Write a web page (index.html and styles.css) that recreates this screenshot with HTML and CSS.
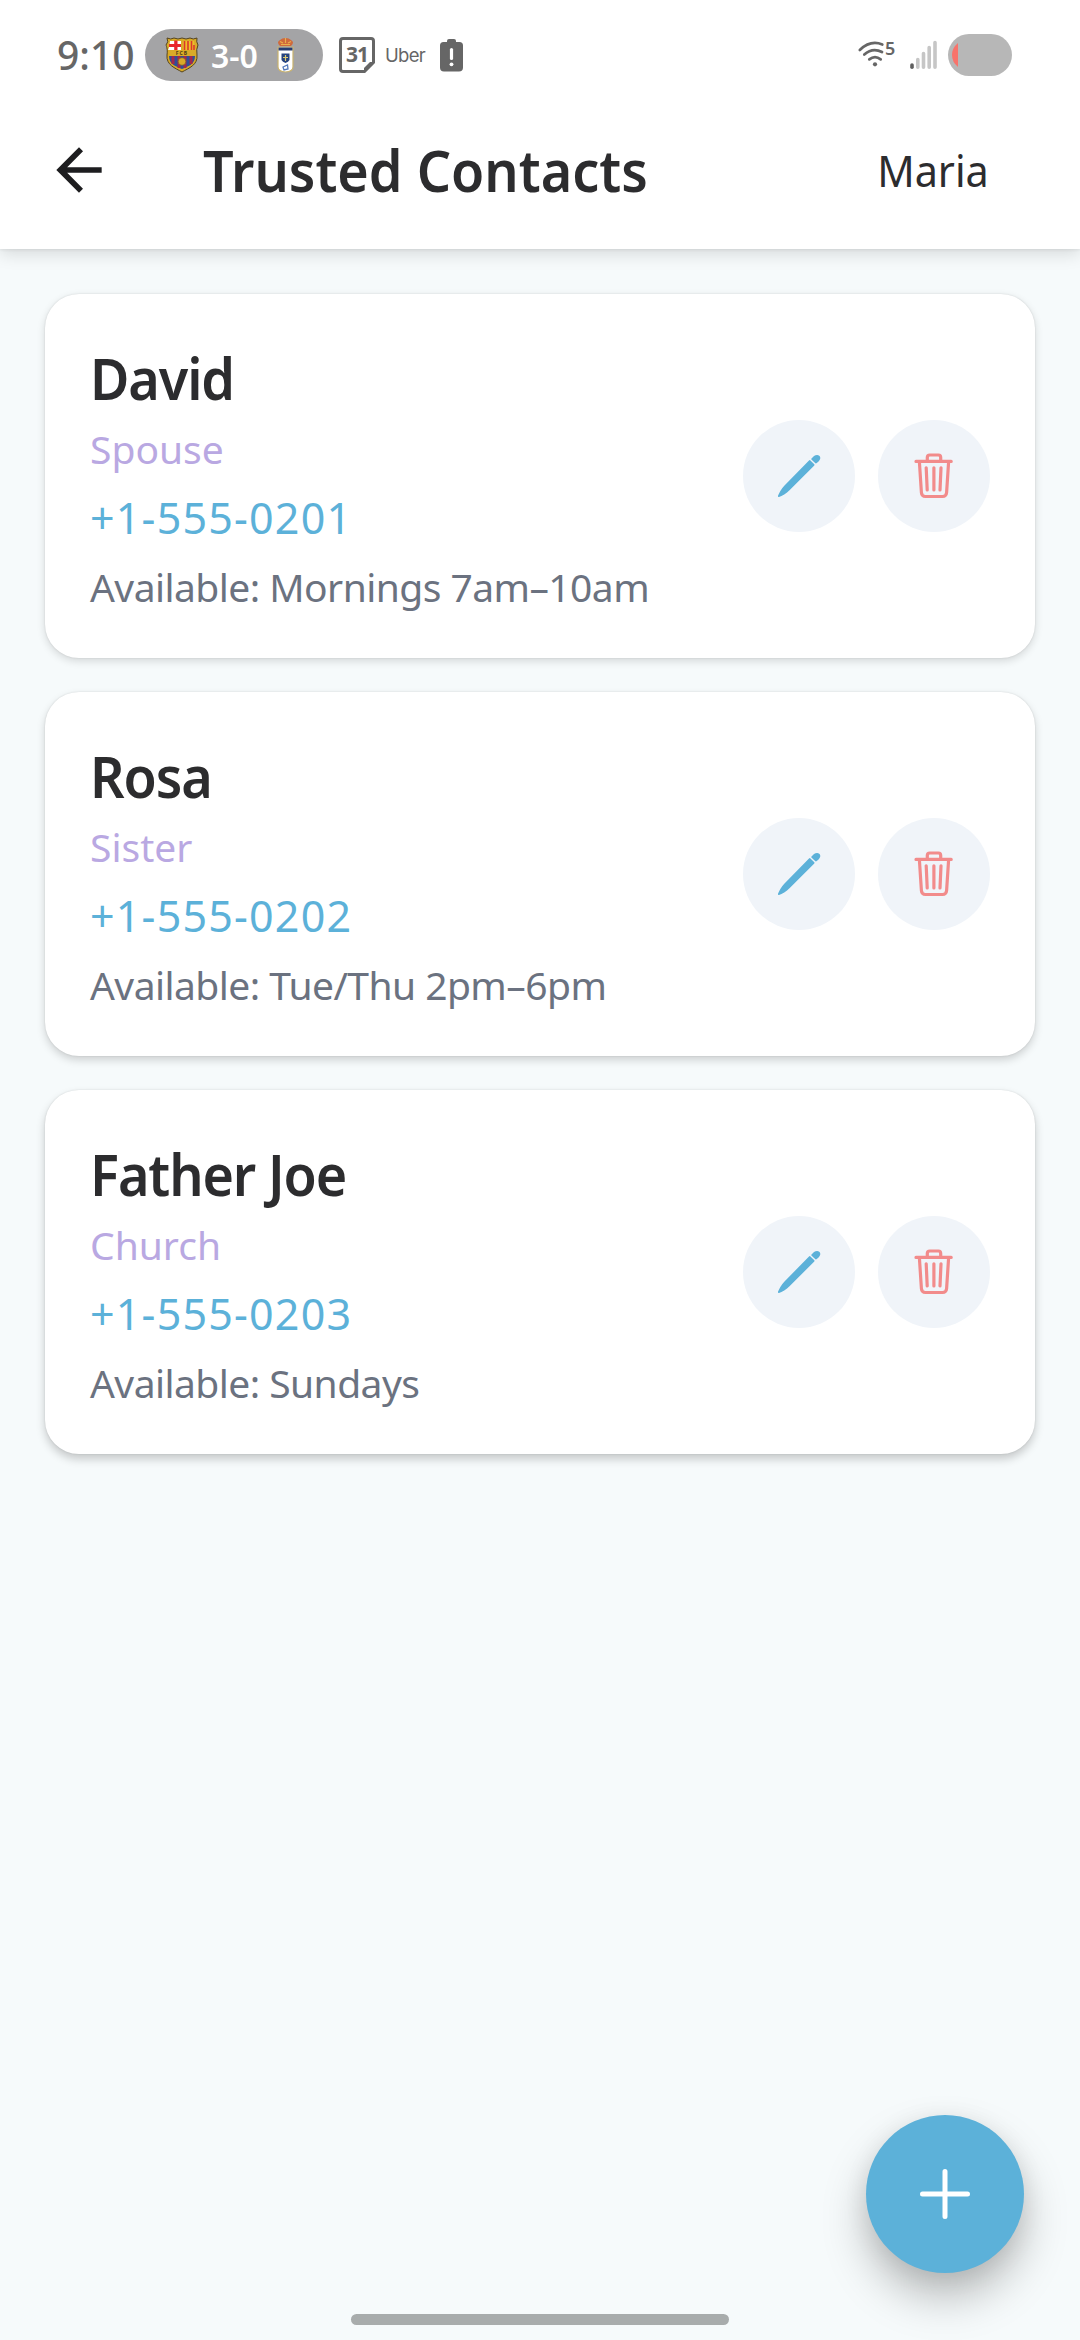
FILE: index.html
```html
<!DOCTYPE html>
<html lang="en">
<head>
<meta charset="utf-8">
<title>Trusted Contacts</title>
<link rel="stylesheet" href="styles.css">
</head>
<body>
<svg class="defs" width="0" height="0" aria-hidden="true">
  <symbol id="pencil" viewBox="0 0 112 112">
    <path d="M67.2 40.2 71.300 44.300Q71.800 44.800 71.300 45.500L46.500 70.300C43.500 73.600 39 76 36 77Q34.700 77.200 35 75.800C36 73 38.500 68.700 41.500 65.500L66 40.500Q66.600 39.700 67.200 40.200Z"/>
    <path d="M68.500 38.600 71 36.100C73.500 34.200 77 34.800 77.300 37.800 77.400 39.300 76.500 40.400 75.300 41.700L73.400 43.300Q72.700 43.700 72.100 43.100L68.400 39.600Q68 39.100 68.500 38.600Z"/>
  </symbol>
  <symbol id="trash" viewBox="0 0 112 112">
    <path d="M38 41.400H73.200M49.300 41V37.500Q49.300 35 51.800 35H60.400Q62.700 35 62.700 37.500V41M41.400 42 43.400 72.500Q43.700 76.500 47.500 76.500H64.500Q68.300 76.500 68.600 72.500L70.600 42M48.200 47.800 49.200 70M55.900 47.800V70M63 47.800 62 70"/>
  </symbol>
</svg>
<div class="screen">
  <header class="top">
    <div class="status">
      <span class="time">9:10</span>
      <div class="score">
        <svg class="barca" viewBox="0 0 34 36">
          <path d="M2 1Q6 3 9 1 13 3 17 1 21 3 25 1 28 3 32 1 31 5 33 8 31 12 32 18C33 28 24 31 17 35 10 31 1 28 2 18 3 12 1 8 1 8Q4 5 2 1Z" fill="#d9aa28" stroke="#55441d" stroke-width="1"/>
          <path d="M5 4H16V13H3Q5 9 5 4Z" fill="#fff"/>
          <path d="M9.200 3.500H12.500V7H16V10H12.500V13H9.200V10H4V7H9.200Z" fill="#e8262c"/>
          <path d="M18 4H29Q29 9 31 13H18Z" fill="#efbd28"/>
          <path d="M19.500 4V13M23 4V13M26.500 4V13M29 8V13" stroke="#d93a2b" stroke-width="1.600"/>
          <path d="M4 19H30C30 27 24 29 17 32 10 29 4 27 4 19Z" fill="#2f4f96"/>
          <path d="M8 19V27M14 19V31M20 19V31M26 19V27" stroke="#a5274b" stroke-width="3"/>
          <circle cx="17" cy="24.500" r="3.800" fill="#d9aa28" stroke="#7b6324" stroke-width=".7"/>
          <text x="17" y="17.800" class="crest-text">FCB</text>
        </svg>
        <span class="result">3-0</span>
        <svg class="oviedo" viewBox="0 0 17 36">
          <path d="M3 9Q-1 5 3 3 5 1 8.500 1 12 1 14 3 18 5 14 9Z" fill="#cf6a3d"/>
          <path d="M4 7.500H13M3 4.500 6 6M14 4.500 11 6M8.500 1V6" stroke="#eab04b" stroke-width="1.100"/>
          <path d="M1 10H16V30Q16 34.500 8.500 35 1 34.500 1 30Z" fill="#fff" stroke="#c9b26d" stroke-width="1.200"/>
          <path d="M1.500 10.500H15.500V13.500H1.500Z" fill="#283d71"/>
          <path d="M4.500 16.500H12.500V23Q11.500 25 8.500 26 5.500 25 4.500 23Z" fill="#27447f"/>
          <path d="M8.500 18V24M6 20.500H11" stroke="#dfcb71" stroke-width="1.200"/>
          <path d="M6 30 10.500 28 11 32 7 33Z" fill="none" stroke="#5379ba" stroke-width="1.300"/>
        </svg>
      </div>
      <svg class="calendar" viewBox="0 0 36 36">
        <path d="M4 1.500H32Q34.500 1.500 34.500 4V25.500L25.500 34.500H4Q1.500 34.500 1.500 32V4Q1.500 1.500 4 1.500Z" fill="none" stroke="#666" stroke-width="3"/>
        <path d="M25 34.500V31L31 25H34.500Z" fill="#666"/>
        <text x="18" y="25" class="cal-text">31</text>
      </svg>
      <span class="uber">Uber</span>
      <svg class="alert" viewBox="0 0 23 33">
        <path d="M7 3V2Q7 0 9 0H14Q16 0 16 2V3H19.500Q23 3 23 6.500V28.500Q23 32.500 19 32.500H4Q0 32.500 0 28.500V6.500Q0 3 3.500 3Z" fill="#666"/>
        <path d="M11.500 10.500V19.500" stroke="#fff" stroke-width="3.200" stroke-linecap="round"/>
        <circle cx="11.500" cy="25.300" r="1.900" fill="#fff"/>
      </svg>
      <svg class="wifi" viewBox="0 0 38 28">
        <g fill="none" stroke="#666" stroke-width="2.700" stroke-linecap="round">
          <path d="M1.800 9Q12.500-1.300 24.300 3.500M6.300 13.600Q14.500 6 24 11M11.300 18.400Q17 13.700 22.700 18.400"/>
        </g>
        <circle cx="17" cy="23.300" r="2.100" fill="#666"/>
        <text x="27" y="13.800" class="wifi-text">5</text>
      </svg>
      <svg class="signal" viewBox="0 0 28 30">
        <g stroke-width="3.600" stroke-linecap="round" stroke="#c6c6c6">
          <path d="M2 25V27.200" stroke="#5f5f5f"/>
          <path d="M7.800 19.500V27.200M13.500 13.500V27.200M19.200 7.500V27.200M25 2.500V27.200"/>
        </g>
      </svg>
      <svg class="battery" viewBox="0 0 64 42">
        <rect width="64" height="42" rx="21" fill="#b7b7b7"/>
        <path d="M10 9V33Q4 28 4 21T10 9Z" fill="#f8736b"/>
      </svg>
    </div>
    <div class="appbar">
      <svg class="back" viewBox="0 0 24 24"><path d="M20 11H7.830l5.590-5.590L12 4l-8 8 8 8 1.410-1.410L7.830 13H20v-2z" fill="#1d1d1f"/></svg>
      <h1 class="title">Trusted Contacts</h1>
      <span class="user">Maria</span>
    </div>
  </header>
  <main class="list">
    <article class="card">
      <div class="info">
        <h2 class="name">David</h2>
        <p class="relation">Spouse</p>
        <p class="phone">+1-555-0201</p>
        <p class="hours">Available: Mornings 7am–10am</p>
      </div>
      <div class="actions">
        <svg class="action edit"><use href="#pencil"/></svg>
        <svg class="action delete"><use href="#trash"/></svg>
      </div>
    </article>
    <article class="card card-mid">
      <div class="info">
        <h2 class="name">Rosa</h2>
        <p class="relation">Sister</p>
        <p class="phone">+1-555-0202</p>
        <p class="hours">Available: Tue/Thu 2pm–6pm</p>
      </div>
      <div class="actions">
        <svg class="action edit"><use href="#pencil"/></svg>
        <svg class="action delete"><use href="#trash"/></svg>
      </div>
    </article>
    <article class="card card-low">
      <div class="info">
        <h2 class="name">Father Joe</h2>
        <p class="relation">Church</p>
        <p class="phone">+1-555-0203</p>
        <p class="hours">Available: Sundays</p>
      </div>
      <div class="actions">
        <svg class="action edit"><use href="#pencil"/></svg>
        <svg class="action delete"><use href="#trash"/></svg>
      </div>
    </article>
  </main>
  <button class="fab" aria-label="Add contact">
    <svg viewBox="0 0 50 50"><path d="M25 2.500V47.500M2.500 25H47.500" stroke="#fff" stroke-width="5" stroke-linecap="round"/></svg>
  </button>
  <div class="homebar"></div>
</div>
</body>
</html>
```
FILE: styles.css
```css
* { box-sizing: border-box; }
body { margin: 0; background: #f6fafb; font-family: "Noto Sans", "Open Sans", sans-serif; }
h1, h2, p { margin: 0; }
svg { display: block; flex: none; overflow: visible; }
.defs { position: absolute; }
.screen { position: relative; width: 1080px; height: 2340px; overflow: hidden; background: #f6fafb; }

.top { height: 249px; background: #fff; box-shadow: 0 5px 16px rgba(0, 0, 0, .13), 0 1px 3px rgba(0, 0, 0, .07); }
.status { display: flex; align-items: center; height: 110px; padding: 0 68px 0 57px; color: #666; white-space: nowrap; }
.time { width: 88px; font-size: 39px; font-weight: 500; line-height: 110px; }
.score { display: flex; align-items: center; width: 178px; height: 52px; padding-left: 20px; border-radius: 26px; background: #a4a4a6; }
.barca { width: 34px; height: 36px; }
.result { width: 66px; margin-left: 12px; padding-top: 1px; color: #fff; font-size: 32px; font-weight: 600; line-height: 52px; }
.oviedo { width: 17px; height: 36px; }
.calendar { width: 36px; height: 36px; margin-left: 16px; }
.uber { width: 55px; margin-left: 10px; font: 18.500px/24px Inter, sans-serif; letter-spacing: -.7px; }
.alert { width: 23px; height: 33px; }
.wifi { width: 38px; height: 28px; margin-left: auto; }
.signal { width: 28px; height: 30px; margin-left: 14px; }
.battery { width: 64px; height: 42px; margin-left: 10px; }
.crest-text { font: 700 5px "Noto Sans", sans-serif; text-anchor: middle; fill: #493b18; letter-spacing: 1px; }
.cal-text { font: 700 21px "Noto Sans", sans-serif; text-anchor: middle; fill: #666; letter-spacing: -1px; }
.wifi-text { font: 600 18px "Noto Sans", sans-serif; fill: #666; }

.appbar { display: flex; align-items: center; height: 120px; padding: 0 91px 0 45px; color: #2c2c2e; }
.back { width: 68px; height: 68px; }
.title { margin-left: 90px; font-size: 58px; font-weight: 600; line-height: 80px; white-space: nowrap; transform: scaleX(.93); transform-origin: left; }
.user { margin-left: auto; font-size: 44px; line-height: 60px; transform: scaleX(.94); transform-origin: right; }

.list { display: flex; flex-direction: column; gap: 34px; padding: 45px; }
.card { display: flex; align-items: center; justify-content: space-between; height: 364px; padding: 0 45px; border-radius: 34px; background: #fff; box-shadow: 0 3px 8px rgba(0, 0, 0, .14), 0 0 2px rgba(0, 0, 0, .12); }
.card-mid { box-shadow: 0 4px 9px rgba(0, 0, 0, .17), 0 0 2px rgba(0, 0, 0, .12); }
.card-low { box-shadow: 0 5px 10px rgba(0, 0, 0, .2), 0 0 2px rgba(0, 0, 0, .12); }
.info { height: 274px; white-space: nowrap; }
.name { color: #2c2c2e; font-size: 58px; font-weight: 600; letter-spacing: -1.200px; line-height: 78px; transform: scaleX(.93); transform-origin: left; }
.relation { color: #b9a8e2; font-size: 39px; line-height: 63px; }
.phone { color: #5cb1d9; font-size: 43px; letter-spacing: 1.200px; line-height: 76px; }
.hours { color: #6b7280; font-size: 39px; letter-spacing: -.550px; line-height: 62px; }
.actions { display: flex; gap: 23px; }
.action { width: 112px; height: 112px; border-radius: 50%; background: #f0f4f9; }
.edit { fill: #5cb1d9; }
.delete { fill: none; stroke: #f28b8b; stroke-width: 3.200; stroke-linecap: round; stroke-linejoin: round; }

.fab { position: absolute; right: 56px; bottom: 67px; display: flex; align-items: center; justify-content: center; width: 158px; height: 158px; padding: 0; border: 0; border-radius: 50%; background: #5cb1d9; box-shadow: 0 24px 44px rgba(0, 0, 0, .25), 0 4px 24px rgba(0, 0, 0, .08); }
.fab svg { width: 50px; height: 50px; }
.homebar { position: absolute; left: 351px; bottom: 15px; width: 378px; height: 11px; border-radius: 6px; background: #a8acac; }
```
